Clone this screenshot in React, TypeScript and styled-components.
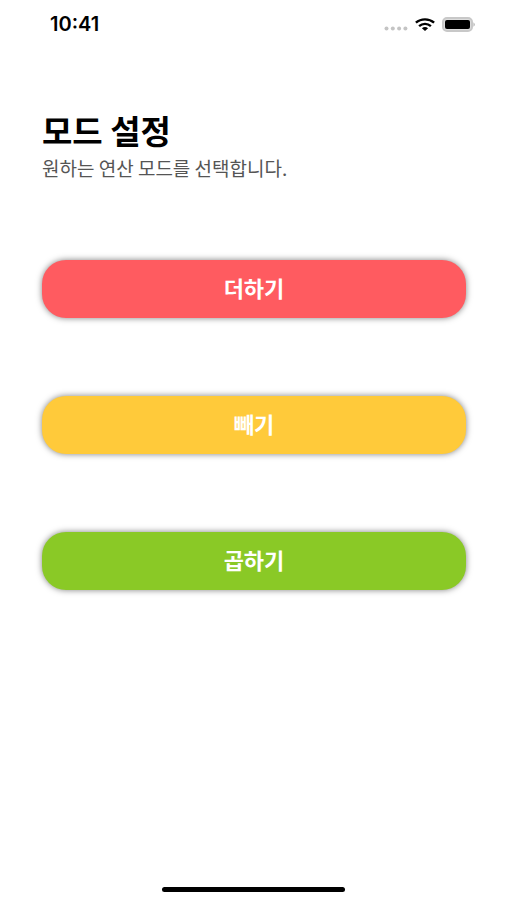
import React from "react";
import styled, { createGlobalStyle } from "styled-components";

const GlobalStyle = createGlobalStyle`
  *, *::before, *::after { box-sizing: border-box; }
  body {
    margin: 0;
    background: #fff;
    color: #000;
    font-family: "Noto Sans CJK KR", sans-serif;
  }
`;

const Screen = styled.div`
  display: flex;
  flex-direction: column;
  min-height: 100vh;
`;

const StatusBar = styled.header`
  display: flex;
  align-items: center;
  justify-content: space-between;
  height: 48px;
  padding: 0 31px 0 50px;
`;

const Clock = styled.time`
  font: 600 20px/24px Inter, sans-serif;
`;

const StatusIcons = styled.div`
  display: flex;
  align-items: center;
  gap: 7px;
`;

const Content = styled.main`
  flex: 1;
  padding: 62px 41px 0 42px;
`;

const Title = styled.h1`
  margin: 0;
  font-size: 33px;
  font-weight: 700;
  line-height: 40px;
`;

const Description = styled.p`
  margin: 6px 0 0;
  color: #555;
  font-size: 19px;
  font-weight: 400;
  line-height: 24px;
`;

const ModeList = styled.div`
  display: flex;
  flex-direction: column;
  gap: 78px;
  margin-top: 80px;
`;

const ModeButton = styled.button<{ $color: string }>`
  width: 100%;
  height: 58px;
  padding: 0 0 4px;
  border: 0;
  border-radius: 24px;
  background: ${({ $color }) => $color};
  box-shadow: 0 0 6px rgba(0, 0, 0, 0.5);
  color: #fff;
  font-family: inherit;
  font-size: 22px;
  font-weight: 700;
  line-height: 32px;
  cursor: pointer;
`;

const HomeArea = styled.footer`
  display: flex;
  justify-content: center;
  padding: 0 0 8px;
`;

const HomeIndicator = styled.div`
  width: 36%;
  height: 5px;
  border-radius: 3px;
  background: #000;
`;

const modes = [
  { label: "더하기", color: "#ff5b60" },
  { label: "빼기", color: "#ffca3a" },
  { label: "곱하기", color: "#8ac926" },
];

function SignalDots() {
  return (
    <svg width="24" height="14" viewBox="0 0 24 14" aria-hidden="true">
      <g fill="#c4c4c4">
        <circle cx="2.5" cy="11.5" r="2" />
        <circle cx="8.8" cy="11.5" r="2" />
        <circle cx="15.1" cy="11.5" r="2" />
        <circle cx="21.4" cy="11.5" r="2" />
      </g>
    </svg>
  );
}

function WifiIcon() {
  return (
    <svg width="20" height="13" viewBox="0 0 20 13" aria-hidden="true">
      <g fill="none" stroke="#000" strokeWidth="2.4">
        <path d="M0.9 4.7C6 0.2 14 0.2 19.1 4.7" />
        <path d="M4.1 8.1C7.5 5.1 12.5 5.1 15.9 8.1" />
      </g>
      <path d="M6.9 10.3Q10 7.8 13.1 10.3L10 13Z" />
    </svg>
  );
}

function BatteryIcon() {
  return (
    <svg width="34" height="15" viewBox="0 0 34 15" aria-hidden="true">
      <rect x="1" y="1" width="29" height="13" rx="4" fill="#ddd" stroke="#c8c8c8" strokeWidth="2" />
      <rect x="3" y="3" width="25" height="9" rx="2" />
      <path d="M31.5 5.2Q34 7.5 31.5 9.8Z" fill="#aaa" />
    </svg>
  );
}

export default function App() {
  return (
    <>
      <GlobalStyle />
      <Screen>
        <StatusBar>
          <Clock>10:41</Clock>
          <StatusIcons>
            <SignalDots />
            <WifiIcon />
            <BatteryIcon />
          </StatusIcons>
        </StatusBar>
        <Content>
          <Title>모드 설정</Title>
          <Description>원하는 연산 모드를 선택합니다.</Description>
          <ModeList>
            {modes.map(({ label, color }) => (
              <ModeButton key={label} type="button" $color={color}>
                {label}
              </ModeButton>
            ))}
          </ModeList>
        </Content>
        <HomeArea>
          <HomeIndicator />
        </HomeArea>
      </Screen>
    </>
  );
}
